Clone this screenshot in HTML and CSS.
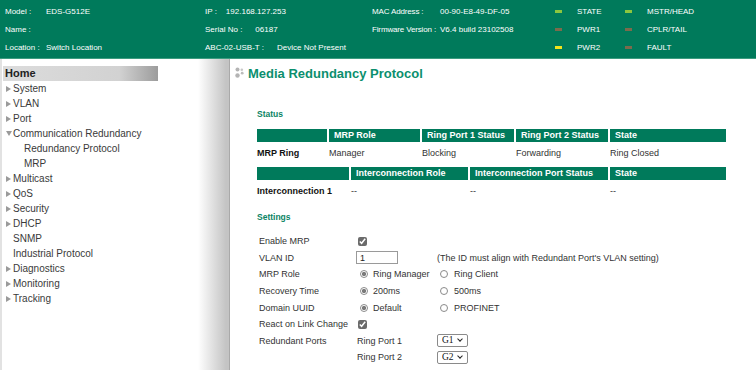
FILE: index.html
```html
<!DOCTYPE html>
<html lang="en">
<head>
    <meta charset="UTF-8">
    <title>Media Redundancy Protocol</title>
    <link rel="stylesheet" href="styles.css">
</head>
<body>
    <div class="header">
        <div class="hcol col-model">
            <div class="hrow"><span class="hlabel">Model :</span><span>EDS-G512E</span></div>
            <div class="hrow"><span class="hlabel">Name :</span></div>
            <div class="hrow"><span class="hlabel">Location :</span><span>Switch Location</span></div>
        </div>
        <div class="hcol col-ip">
            <div class="hrow">IP :<span class="hval ip">192.168.127.253</span></div>
            <div class="hrow">Serial No :<span class="hval">06187</span></div>
            <div class="hrow">ABC-02-USB-T :<span class="hval">Device Not Present</span></div>
        </div>
        <div class="hcol col-mac">
            <div class="hrow"><span class="hlabel">MAC Address :</span><span>00-90-E8-49-DF-05</span></div>
            <div class="hrow"><span class="hlabel">Firmware Version :</span><span>V6.4 build 23102508</span></div>
            <div class="hrow"></div>
        </div>
        <div class="hcol col-led">
            <div class="hrow"><span class="led on"></span>STATE</div>
            <div class="hrow"><span class="led off"></span>PWR1</div>
            <div class="hrow"><span class="led warn"></span>PWR2</div>
        </div>
        <div class="hcol col-led">
            <div class="hrow"><span class="led on"></span>MSTR/HEAD</div>
            <div class="hrow"><span class="led off"></span>CPLR/TAIL</div>
            <div class="hrow"><span class="led off"></span>FAULT</div>
        </div>
    </div>

    <div class="main">
        <div class="sidebar">
            <div class="home">Home</div>
            <ul class="menu">
                <li><span class="arrow"></span>System</li>
                <li><span class="arrow"></span>VLAN</li>
                <li><span class="arrow"></span>Port</li>
                <li><span class="arrow down"></span>Communication Redundancy</li>
                <li class="sub">Redundancy Protocol</li>
                <li class="sub">MRP</li>
                <li><span class="arrow"></span>Multicast</li>
                <li><span class="arrow"></span>QoS</li>
                <li><span class="arrow"></span>Security</li>
                <li><span class="arrow"></span>DHCP</li>
                <li class="plain">SNMP</li>
                <li class="plain">Industrial Protocol</li>
                <li><span class="arrow"></span>Diagnostics</li>
                <li><span class="arrow"></span>Monitoring</li>
                <li><span class="arrow"></span>Tracking</li>
            </ul>
        </div>

        <div class="content">
            <h1 class="title">
                <svg class="title-icon" width="10" height="11" viewBox="0 0 10 11">
                    <circle cx="2.5" cy="2.5" r="2" fill="#b4b4b4"/>
                    <circle cx="2.5" cy="8.5" r="2.2" fill="#b4b4b4"/>
                    <circle cx="6.8" cy="2.8" r="1.3" fill="#c8c8c8"/>
                    <circle cx="7.2" cy="6.2" r="1.4" fill="#bcbcbc"/>
                </svg>
                Media Redundancy Protocol
            </h1>

            <div class="section-label status-label">Status</div>

            <table class="grid">
                <colgroup>
                    <col style="width: 70px"><col style="width: 91px"><col style="width: 92px"><col style="width: 92px"><col style="width: 116px">
                </colgroup>
                <tr>
                    <th></th><th>MRP Role</th><th>Ring Port 1 Status</th><th>Ring Port 2 Status</th><th>State</th>
                </tr>
                <tr>
                    <td class="rowname">MRP Ring</td><td>Manager</td><td>Blocking</td><td>Forwarding</td><td>Ring Closed</td>
                </tr>
            </table>

            <table class="grid second">
                <colgroup>
                    <col style="width: 92px"><col style="width: 117px"><col style="width: 138px"><col style="width: 116px">
                </colgroup>
                <tr>
                    <th></th><th>Interconnection Role</th><th>Interconnection Port Status</th><th>State</th>
                </tr>
                <tr>
                    <td class="rowname">Interconnection 1</td><td>--</td><td>--</td><td>--</td>
                </tr>
            </table>

            <div class="section-label settings-label">Settings</div>

            <div class="settings">
                <div class="slabel">Enable MRP</div>
                <div class="sfield"><input type="checkbox" checked></div>
                <div></div>

                <div class="slabel">VLAN ID</div>
                <div class="sfield"><input type="text" class="vlan" value="1"></div>
                <div class="note">(The ID must align with Redundant Port's VLAN setting)</div>

                <div class="slabel">MRP Role</div>
                <label class="sfield radio"><input type="radio" name="role" checked>Ring Manager</label>
                <label class="radio alt"><input type="radio" name="role">Ring Client</label>

                <div class="slabel">Recovery Time</div>
                <label class="sfield radio"><input type="radio" name="rec" checked>200ms</label>
                <label class="radio alt"><input type="radio" name="rec">500ms</label>

                <div class="slabel">Domain UUID</div>
                <label class="sfield radio"><input type="radio" name="uuid" checked>Default</label>
                <label class="radio alt"><input type="radio" name="uuid">PROFINET</label>

                <div class="slabel">React on Link Change</div>
                <div class="sfield"><input type="checkbox" checked></div>
                <div></div>

                <div class="slabel">Redundant Ports</div>
                <div class="sfield">Ring Port 1</div>
                <div><span class="port-wrap"><select class="port"><option>G1</option><option>G2</option></select></span></div>

                <div class="slabel"></div>
                <div class="sfield">Ring Port 2</div>
                <div><span class="port-wrap"><select class="port"><option>G1</option><option selected>G2</option></select></span></div>
            </div>
        </div>
    </div>
</body>
</html>
```

FILE: styles.css
```css
:root {
    --green: #007a5b;
    --title-green: #0b8f6e;
    --text: #333333;
}

body {
    margin: 0;
    font-family: 'Liberation Sans', Arial, sans-serif;
    color: var(--text);
    background-color: white;
    height: 370px;
    overflow: hidden;
}

/* top info bar */
.header {
    display: flex;
    height: 55px;
    padding-top: 3px;
    background-color: var(--green);
    border-bottom: 1px solid #3c9c80;
    color: white;
    font-size: 8px;
}

.hcol {
    display: flex;
    flex-direction: column;
}

.hrow {
    height: 18px;
    line-height: 18px;
    white-space: nowrap;
}

.col-model {
    width: 200px;
    padding-left: 5px;
}

.col-model .hlabel {
    display: inline-block;
    width: 41px;
}

.col-ip {
    width: 167px;
}

.hval {
    margin-left: 13px;
}

.hval.ip {
    margin-left: 9px;
}

.col-mac {
    width: 182px;
}

.col-mac .hlabel {
    display: inline-block;
    width: 68px;
    letter-spacing: -0.15px;
}

.col-led {
    width: 70px;
}

.led {
    display: inline-block;
    width: 7px;
    height: 3px;
    margin: 0 15px 1px 1px;
    vertical-align: middle;
}

.led.on {
    background-color: #8cc63f;
}

.led.off {
    background-color: #7b6a4c;
}

.led.warn {
    background-color: #f2e31c;
}

/* body */
.main {
    display: flex;
    height: 311px;
}

.sidebar {
    width: 226px;
    padding: 7px 0 0 3px;
    background: linear-gradient(to right, #ffffff 0, #ffffff 198px, #c4c4c4 226px);
    border-right: 1px solid #a9a9a9;
    box-shadow: inset 2px 0 0 #e2e2e2;
}

.home {
    width: 153px;
    height: 15px;
    line-height: 15px;
    padding-left: 2px;
    font-size: 11px;
    font-weight: bold;
    color: #222;
    background: linear-gradient(to right, #dcdcdc 0%, #d2d2d2 75%, #9c9c9c 100%);
}

.menu {
    list-style-type: none;
    margin: 0;
    padding: 0 0 0 3px;
    font-size: 10px;
    color: #3a3a3a;
}

.menu li {
    height: 15px;
    line-height: 15px;
    white-space: nowrap;
}

.menu li.plain {
    padding-left: 7px;
}

.menu li.sub {
    padding-left: 18px;
}

.arrow {
    display: inline-block;
    width: 0;
    height: 0;
    margin-right: 2px;
    border-left: 5px solid #9a9a9a;
    border-top: 3px solid transparent;
    border-bottom: 3px solid transparent;
    vertical-align: 0;
}

.arrow.down {
    border-left: 3px solid transparent;
    border-right: 3px solid transparent;
    border-top: 5px solid #9a9a9a;
    border-bottom: none;
    margin-right: 1px;
    vertical-align: 1px;
}

.content {
    flex: 1;
    padding: 6px 0 0 5px;
}

.title {
    display: flex;
    align-items: center;
    gap: 3px;
    margin: 0;
    height: 16px;
    font-size: 13px;
    font-weight: bold;
    color: var(--title-green);
}

.title-icon {
    margin-top: -1px;
}

.section-label {
    margin-left: 22px;
    height: 11px;
    line-height: 11px;
    font-size: 8.5px;
    font-weight: bold;
    color: #0b8464;
}

.status-label {
    margin-top: 28px;
}

.settings-label {
    margin-top: 10px;
}

.grid {
    table-layout: fixed;
    width: 473px;
    margin: 9px 0 0 20px;
    border-collapse: separate;
    border-spacing: 2px 0;
    font-size: 9px;
}

.grid.second {
    margin-top: 3px;
}

.grid th {
    height: 13px;
    padding: 0 0 0 5px;
    background-color: var(--green);
    color: white;
    text-align: left;
    white-space: nowrap;
    line-height: 13px;
}

.grid td {
    height: 22px;
    padding: 0;
    white-space: nowrap;
    color: var(--text);
}

.grid td.rowname {
    font-weight: bold;
    color: #111;
}

/* settings form */
.settings {
    display: grid;
    grid-template-columns: 98px 80px auto;
    grid-auto-rows: 16.6px;
    align-items: center;
    margin: 10px 0 0 24px;
    font-size: 9px;
    white-space: nowrap;
}

.sfield input[type="checkbox"] {
    width: 9px;
    height: 9px;
    margin: 0 0 0 1px;
    accent-color: #6b6b6b;
    vertical-align: middle;
}

.vlan {
    width: 37px;
    height: 11px;
    padding: 0 0 0 3px;
    margin: 0 0 0 -1px;
    border: 1px solid #9a9a9a;
    font-family: 'Liberation Sans', Arial, sans-serif;
    font-size: 9px;
    color: #222;
}

.note {
    color: var(--text);
}

.radio {
    display: flex;
    align-items: center;
}

.radio input {
    appearance: none;
    width: 8px;
    height: 8px;
    margin: 0 5px 0 3px;
    border: 1px solid #8a8a8a;
    border-radius: 50%;
    background-color: white;
}

.radio input:checked {
    background: radial-gradient(circle, #7a7a7a 0, #7a7a7a 45%, #ffffff 55%);
}

.radio.alt input {
    margin-left: 3px;
    margin-right: 6px;
}

.port-wrap {
    position: relative;
    display: inline-block;
    vertical-align: middle;
}

.port-wrap::after {
    content: '';
    position: absolute;
    right: 6px;
    top: 3px;
    width: 3px;
    height: 3px;
    border-right: 1.5px solid #222;
    border-bottom: 1.5px solid #222;
    transform: rotate(45deg);
    pointer-events: none;
}

.port {
    appearance: none;
    display: block;
    width: 31px;
    height: 13px;
    padding: 0 0 0 4px;
    font-family: 'Liberation Serif', 'Times New Roman', serif;
    font-size: 9.5px;
    line-height: 11px;
    border: 1px solid #8a8a8a;
    border-radius: 2px;
    background-color: white;
    color: #111;
}
```
